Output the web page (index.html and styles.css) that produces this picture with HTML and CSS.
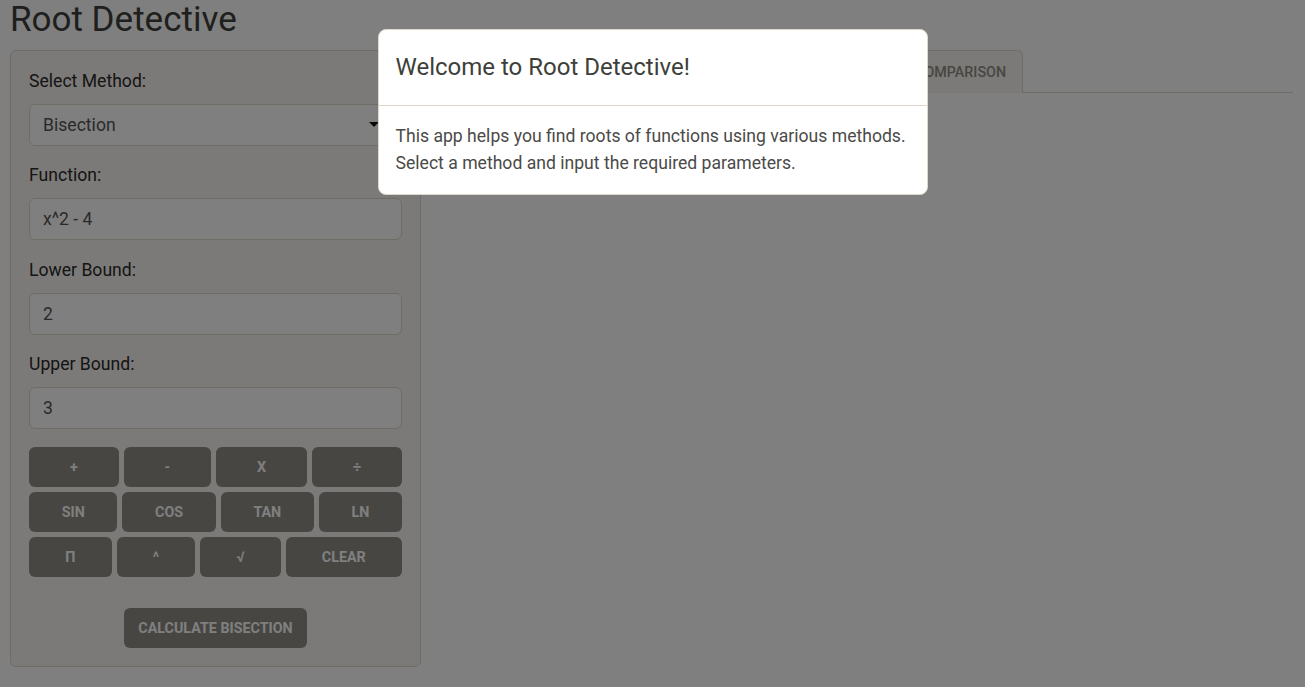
FILE: index.html
```html
<!DOCTYPE html>
<html lang="en">
<head>
<meta charset="utf-8">
<title>Root Detective</title>
<link rel="stylesheet" href="styles.css">
</head>
<body>
<div class="page">
  <h2 class="app-title">Root Detective</h2>
  <div class="layout">
    <aside class="well">
      <div class="group">
        <label class="lbl">Select Method:</label>
        <div class="select">
          <span>Bisection</span>
          <span class="caret"></span>
        </div>
      </div>
      <div class="group">
        <label class="lbl">Function:</label>
        <div class="input">x^2 - 4</div>
      </div>
      <div class="group">
        <label class="lbl">Lower Bound:</label>
        <div class="input">2</div>
      </div>
      <div class="group">
        <label class="lbl">Upper Bound:</label>
        <div class="input">3</div>
      </div>
      <div class="keypad">
        <div class="krow">
          <button class="btn">+</button>
          <button class="btn">-</button>
          <button class="btn">X</button>
          <button class="btn">÷</button>
        </div>
        <div class="krow">
          <button class="btn">sin</button>
          <button class="btn">cos</button>
          <button class="btn">tan</button>
          <button class="btn">ln</button>
        </div>
        <div class="krow">
          <button class="btn">π</button>
          <button class="btn">^</button>
          <button class="btn">√</button>
          <button class="btn">Clear</button>
        </div>
      </div>
      <div class="calc-wrap">
        <button class="btn calc">Calculate Bisection</button>
      </div>
    </aside>
    <main class="main">
      <ul class="tabs">
        <li class="tab active">Results</li>
        <li class="tab">Iterations</li>
        <li class="tab">Graph</li>
        <li class="tab">Error Analysis</li>
        <li class="tab">Comparison</li>
      </ul>
    </main>
  </div>
</div>

<div class="backdrop"></div>
<div class="modal">
  <div class="modal-content">
    <div class="modal-header">
      <h4 class="modal-title">Welcome to Root Detective!</h4>
    </div>
    <div class="modal-body">
      This app helps you find roots of functions using various methods.<br>
      Select a method and input the required parameters.
    </div>
  </div>
</div>
</body>
</html>
```

FILE: styles.css
```css
* { box-sizing: border-box; }

body {
  margin: 0;
  background: #ffffff;
  font-family: Roboto, "Noto Sans", sans-serif;
  color: #3e3f3a;
  font-size: 17.6px;
}

.page {
  padding: 0 12px 0 10px;
}

.app-title {
  margin: 0;
  font-size: 35px;
  font-weight: 400;
  line-height: 40px;
  color: #3e3f3a;
}

.layout {
  margin-top: 10px;
  display: grid;
  grid-template-columns: 411px 1fr;
  column-gap: 26px;
  align-items: start;
}

.well {
  background: #f8f5f0;
  border: 1px solid #dfd7ca;
  border-radius: 6px;
  padding: 18px;
}

.group {
  margin-bottom: 17.4px;
}

.lbl {
  display: block;
  font-size: 17.6px;
  line-height: 24px;
  margin-bottom: 11px;
  color: #2a2a2a;
  padding-top: 2px;
  margin-top: -2px;
}

.input, .select {
  height: 42px;
  border: 1px solid #dfd7ca;
  border-radius: 6px;
  background: #ffffff;
  padding: 0 13px;
  display: flex;
  align-items: center;
  font-size: 17.6px;
  color: #555555;
}

.select {
  justify-content: space-between;
  padding-right: 22px;
}

.caret {
  width: 0;
  height: 0;
  border-left: 5px solid transparent;
  border-right: 5px solid transparent;
  border-top: 5px solid #111111;
  margin-top: -2px;
}

.keypad {
  margin-top: 0;
  display: flex;
  flex-direction: column;
  gap: 5px;
}

.krow {
  display: flex;
  gap: 5px;
}

.btn {
  flex: 1 1 auto;
  height: 40px;
  border: none;
  border-radius: 6px;
  background: #8e8c84;
  color: #ffffff;
  font-family: Roboto, "Noto Sans", sans-serif;
  font-size: 14.3px;
  font-weight: 700;
  text-transform: uppercase;
  padding: 0 12px;
}

.calc-wrap {
  display: flex;
  justify-content: center;
  margin-top: 31px;
}

.btn.calc {
  flex: none;
  padding: 0 14px;
}

.tabs {
  list-style: none;
  margin: 0;
  padding: 0;
  display: flex;
  border-bottom: 1px solid #dfd7ca;
  height: 43px;
}

.tab {
  height: 43px;
  padding: 0 16px;
  line-height: 42px;
  background: #f8f5f0;
  border: 1px solid #dfd7ca;
  border-bottom: none;
  border-radius: 6px 6px 0 0;
  color: #8e8c84;
  font-size: 14.3px;
  font-weight: 500;
  text-transform: uppercase;
  margin-right: 4px;
}

.tab.active {
  background: #ffffff;
  color: #3e3f3a;
}

.backdrop {
  position: fixed;
  inset: 0;
  background: rgba(0, 0, 0, 0.5);
}

.modal {
  position: fixed;
  inset: 0;
  display: flex;
  justify-content: center;
  align-items: flex-start;
  padding-top: 29px;
}

.modal-content {
  width: 550px;
  background: #ffffff;
  border: 1px solid #dfd7ca;
  border-radius: 8px;
}

.modal-header {
  padding: 16px 17px;
  border-bottom: 1px solid #dfd7ca;
}

.modal-title {
  margin: 0;
  font-size: 24px;
  font-weight: 400;
  line-height: 43px;
  color: #3e3f3a;
}

.modal-body {
  padding: 17px 17px 17px;
  font-size: 17.6px;
  line-height: 27px;
  color: #4a4a48;
}
```
